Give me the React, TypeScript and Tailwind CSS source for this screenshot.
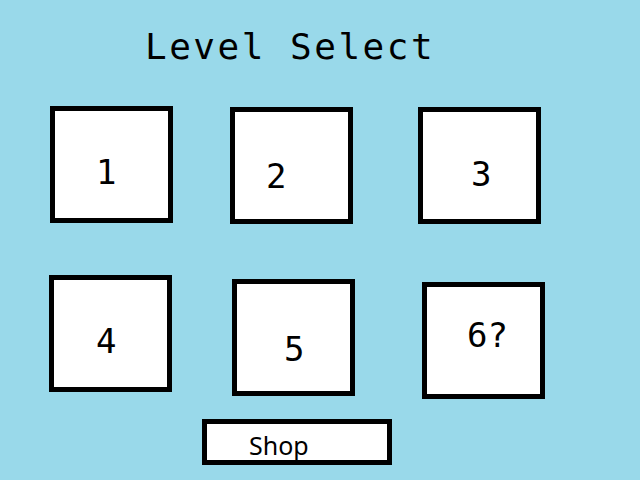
import React from "react";

const mono = { fontFamily: '"DejaVu Sans Mono", monospace' };

function Box({ label, cls }: { label: string; cls: string }) {
  return (
    <div
      className={`w-[123px] h-[117px] shrink-0 border-[5px] border-black bg-white text-black text-[34px] leading-[40px] ${cls}`}
      style={mono}
    >
      {label}
    </div>
  );
}

export default function App() {
  return (
    <div className="w-[640px] h-[480px] bg-[#99d9ea] overflow-hidden flex flex-col">
      <h1
        className="pt-[27px] pl-[145px] text-[36px] leading-[40px] tracking-[2.5px] text-black font-normal"
        style={mono}
      >
        Level Select
      </h1>
      <div className="flex items-start mt-[39px]">
        <Box label="1" cls="ml-[50px] pl-[41px] pt-[41px]" />
        <Box label="2" cls="ml-[57px] mt-[1px] pl-[31px] pt-[44px]" />
        <Box label="3" cls="ml-[65px] mt-[1px] pl-[48px] pt-[42px]" />
      </div>
      <div className="flex items-start mt-[51px]">
        <Box label="4" cls="ml-[49px] pl-[42px] pt-[41px]" />
        <Box label="5" cls="ml-[60px] mt-[4px] pl-[47px] pt-[45px]" />
        <Box label="6?" cls="ml-[67px] mt-[7px] pl-[40px] pt-[28px]" />
      </div>
      <div className="mt-[20px] ml-[202px]">
        <div
          className="w-[190px] h-[46px] border-[5px] border-black bg-white pl-[42px] pt-[5px] text-[25px] leading-[32px] text-black overflow-hidden cursor-pointer"
          style={{ fontFamily: '"Noto Sans", sans-serif' }}
        >
          Shop
        </div>
      </div>
    </div>
  );
}
